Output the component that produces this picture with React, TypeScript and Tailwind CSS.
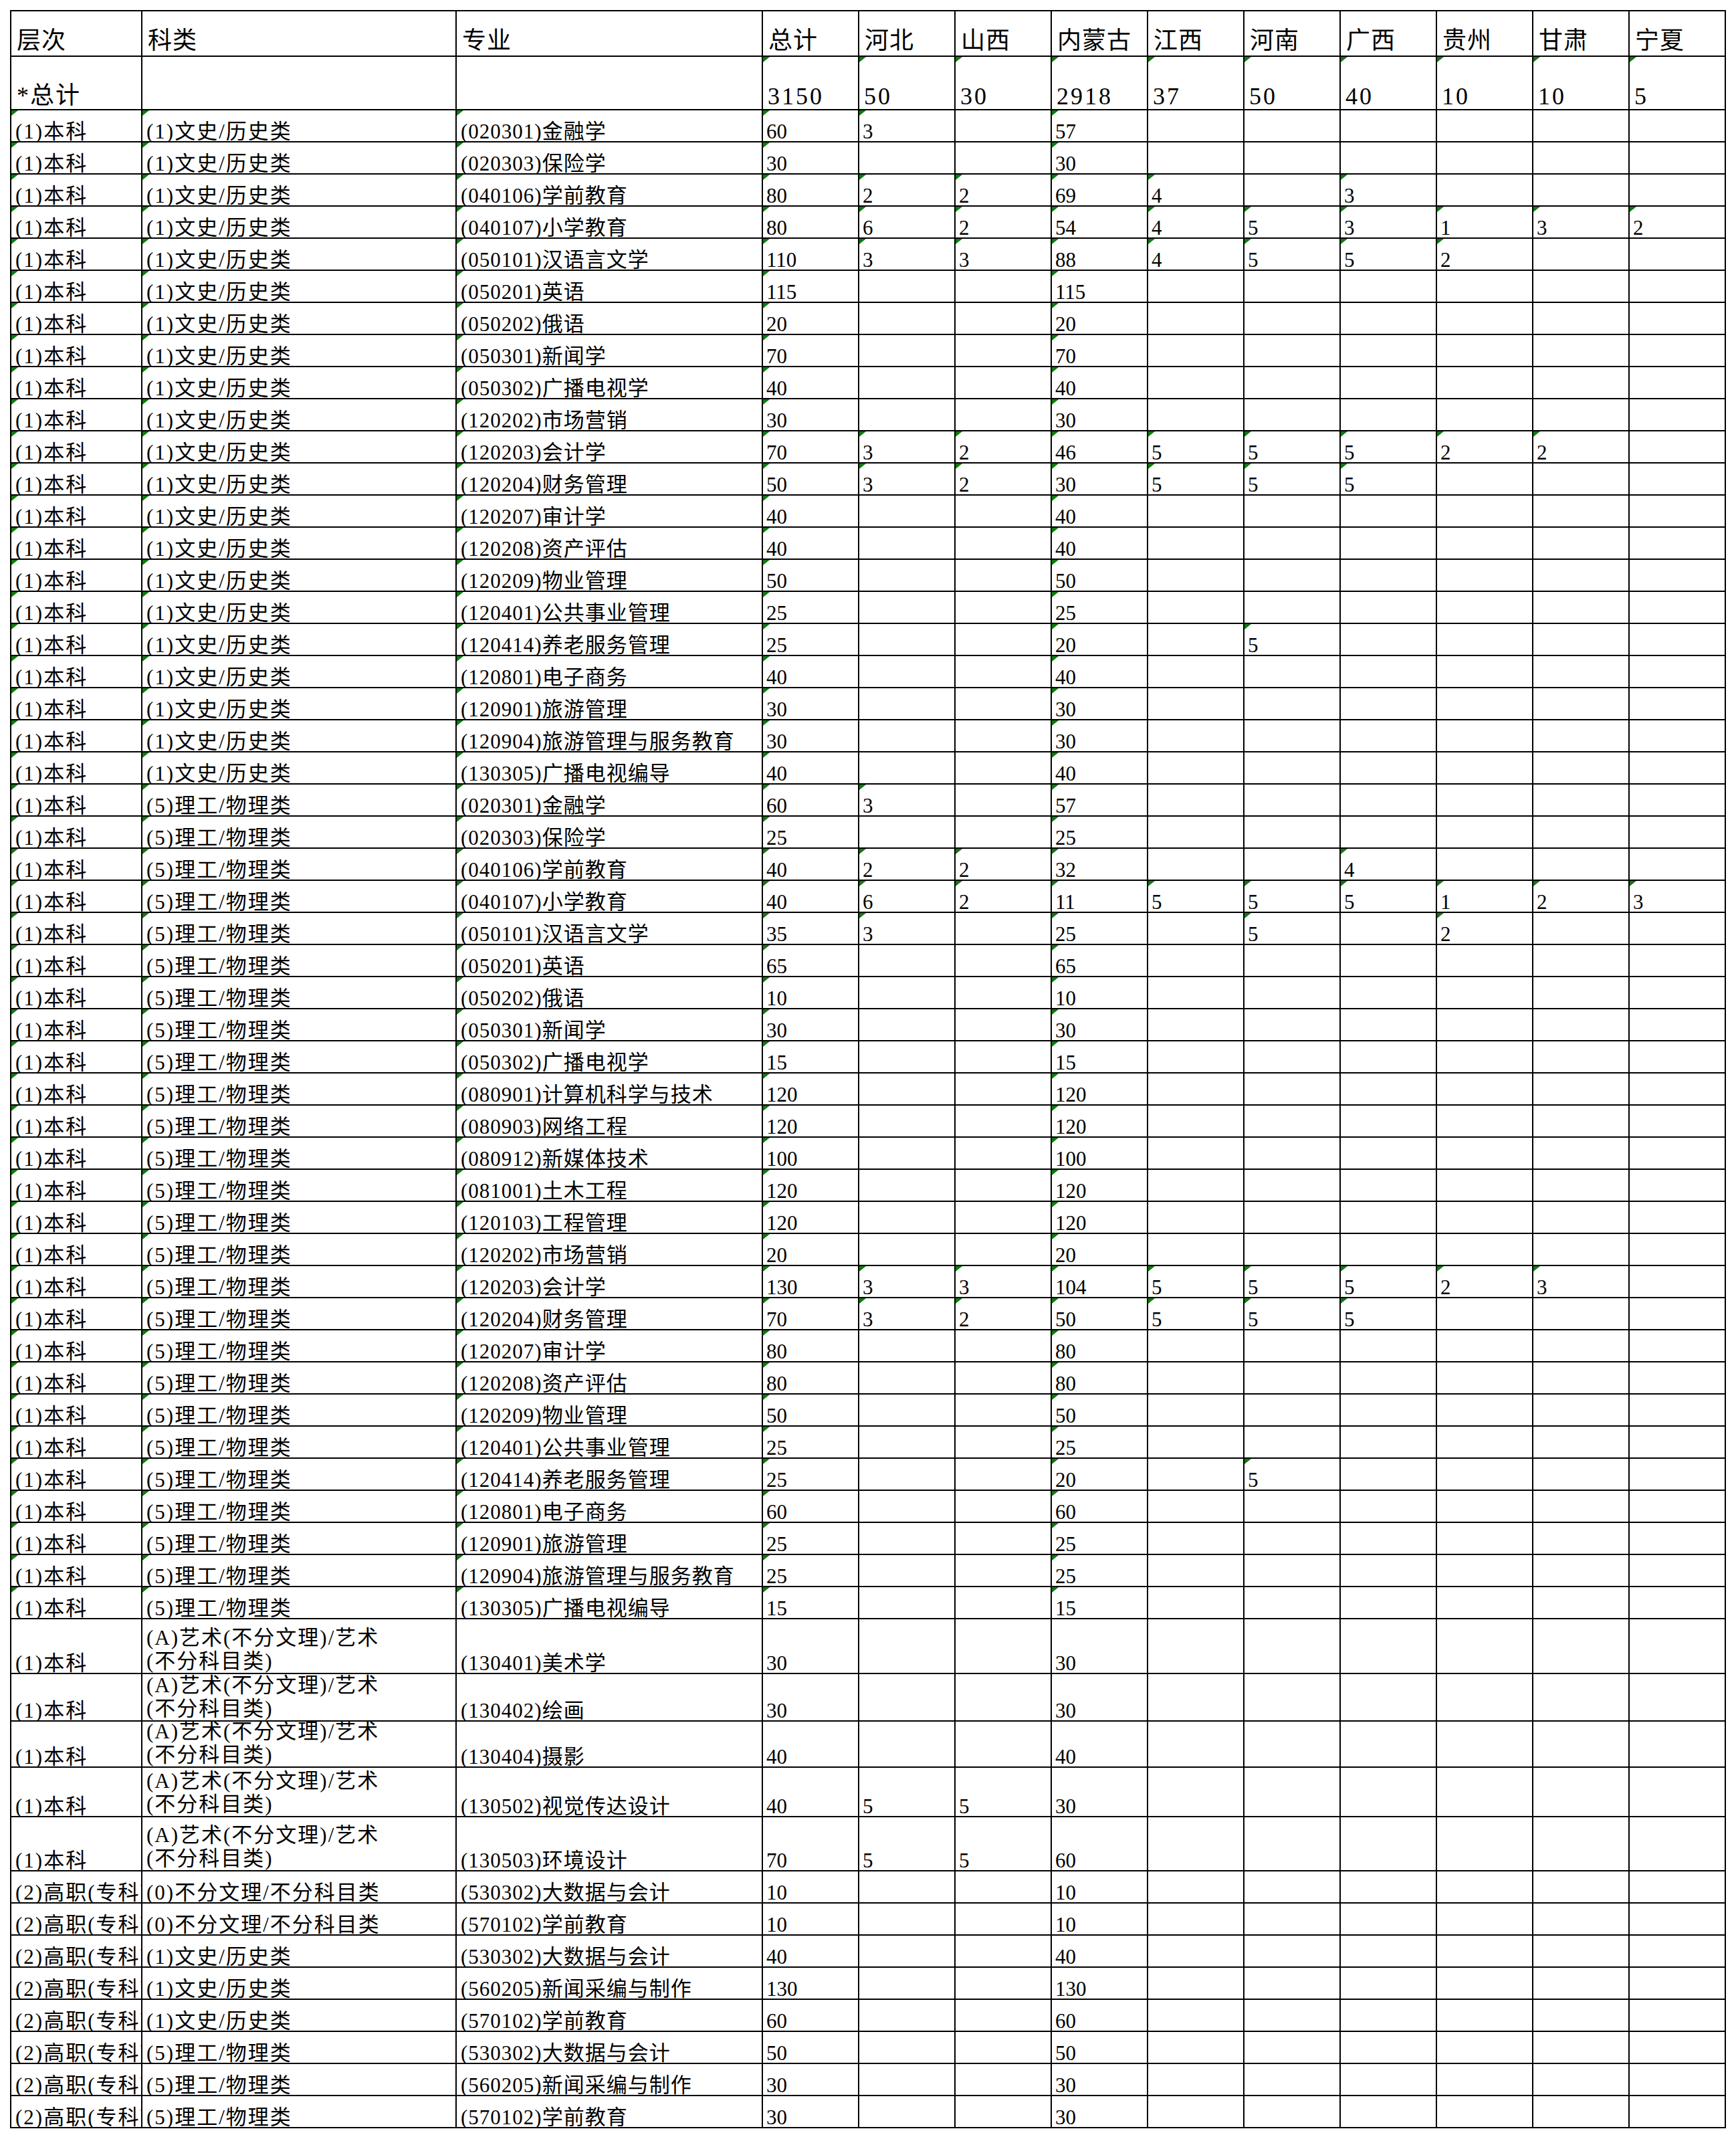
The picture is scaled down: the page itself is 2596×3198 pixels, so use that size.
import React from 'react';

const PROVINCES = ['河北', '山西', '内蒙古', '江西', '河南', '广西', '贵州', '甘肃', '宁夏'];

type Row = {
  level: string;
  kind: string[];
  major: string;
  nums: string[];
  flag: boolean; // green "number stored as text" marks
};

const BK = '(1)本科';
const GZ = '(2)高职(专科)';
const WS = '(1)文史/历史类';
const LG = '(5)理工/物理类';
const YS = ['(A)艺术(不分文理)/艺术', '(不分科目类)'];
const BF = '(0)不分文理/不分科目类';

// 总计, 河北, 山西, 内蒙古, 江西, 河南, 广西, 贵州, 甘肃, 宁夏
const raw: [string, string | string[], string, string][] = [
  [BK, WS, '(020301)金融学', '60,3,,57'],
  [BK, WS, '(020303)保险学', '30,,,30'],
  [BK, WS, '(040106)学前教育', '80,2,2,69,4,,3'],
  [BK, WS, '(040107)小学教育', '80,6,2,54,4,5,3,1,3,2'],
  [BK, WS, '(050101)汉语言文学', '110,3,3,88,4,5,5,2'],
  [BK, WS, '(050201)英语', '115,,,115'],
  [BK, WS, '(050202)俄语', '20,,,20'],
  [BK, WS, '(050301)新闻学', '70,,,70'],
  [BK, WS, '(050302)广播电视学', '40,,,40'],
  [BK, WS, '(120202)市场营销', '30,,,30'],
  [BK, WS, '(120203)会计学', '70,3,2,46,5,5,5,2,2'],
  [BK, WS, '(120204)财务管理', '50,3,2,30,5,5,5'],
  [BK, WS, '(120207)审计学', '40,,,40'],
  [BK, WS, '(120208)资产评估', '40,,,40'],
  [BK, WS, '(120209)物业管理', '50,,,50'],
  [BK, WS, '(120401)公共事业管理', '25,,,25'],
  [BK, WS, '(120414)养老服务管理', '25,,,20,,5'],
  [BK, WS, '(120801)电子商务', '40,,,40'],
  [BK, WS, '(120901)旅游管理', '30,,,30'],
  [BK, WS, '(120904)旅游管理与服务教育', '30,,,30'],
  [BK, WS, '(130305)广播电视编导', '40,,,40'],
  [BK, LG, '(020301)金融学', '60,3,,57'],
  [BK, LG, '(020303)保险学', '25,,,25'],
  [BK, LG, '(040106)学前教育', '40,2,2,32,,,4'],
  [BK, LG, '(040107)小学教育', '40,6,2,11,5,5,5,1,2,3'],
  [BK, LG, '(050101)汉语言文学', '35,3,,25,,5,,2'],
  [BK, LG, '(050201)英语', '65,,,65'],
  [BK, LG, '(050202)俄语', '10,,,10'],
  [BK, LG, '(050301)新闻学', '30,,,30'],
  [BK, LG, '(050302)广播电视学', '15,,,15'],
  [BK, LG, '(080901)计算机科学与技术', '120,,,120'],
  [BK, LG, '(080903)网络工程', '120,,,120'],
  [BK, LG, '(080912)新媒体技术', '100,,,100'],
  [BK, LG, '(081001)土木工程', '120,,,120'],
  [BK, LG, '(120103)工程管理', '120,,,120'],
  [BK, LG, '(120202)市场营销', '20,,,20'],
  [BK, LG, '(120203)会计学', '130,3,3,104,5,5,5,2,3'],
  [BK, LG, '(120204)财务管理', '70,3,2,50,5,5,5'],
  [BK, LG, '(120207)审计学', '80,,,80'],
  [BK, LG, '(120208)资产评估', '80,,,80'],
  [BK, LG, '(120209)物业管理', '50,,,50'],
  [BK, LG, '(120401)公共事业管理', '25,,,25'],
  [BK, LG, '(120414)养老服务管理', '25,,,20,,5'],
  [BK, LG, '(120801)电子商务', '60,,,60'],
  [BK, LG, '(120901)旅游管理', '25,,,25'],
  [BK, LG, '(120904)旅游管理与服务教育', '25,,,25'],
  [BK, LG, '(130305)广播电视编导', '15,,,15'],
  [BK, YS, '(130401)美术学', '30,,,30'],
  [BK, YS, '(130402)绘画', '30,,,30'],
  [BK, YS, '(130404)摄影', '40,,,40'],
  [BK, YS, '(130502)视觉传达设计', '40,5,5,30'],
  [BK, YS, '(130503)环境设计', '70,5,5,60'],
  [GZ, BF, '(530302)大数据与会计', '10,,,10'],
  [GZ, BF, '(570102)学前教育', '10,,,10'],
  [GZ, WS, '(530302)大数据与会计', '40,,,40'],
  [GZ, WS, '(560205)新闻采编与制作', '130,,,130'],
  [GZ, WS, '(570102)学前教育', '60,,,60'],
  [GZ, LG, '(530302)大数据与会计', '50,,,50'],
  [GZ, LG, '(560205)新闻采编与制作', '30,,,30'],
  [GZ, LG, '(570102)学前教育', '30,,,30'],
];

const rows: Row[] = raw.map(([level, kind, major, nums], i) => {
  const list = nums.split(',');
  while (list.length < 10) list.push('');
  return {
    level,
    kind: Array.isArray(kind) ? kind : [kind],
    major,
    nums: list,
    flag: i < 47,
  };
});

const TOTALS = ['3150', '50', '30', '2918', '37', '50', '40', '10', '10', '5'];

function Mark() {
  return (
    <span className="absolute left-0 top-0 h-0 w-0 border-t-[8px] border-r-[10px] border-t-[#0b7d0b] border-r-transparent" />
  );
}

function Cell(props: { children?: React.ReactNode; mark?: boolean; className?: string }) {
  return (
    <div
      className={
        'relative flex items-end overflow-hidden whitespace-nowrap border-b-2 border-r-2 border-black ' +
        (props.className ?? '')
      }
    >
      {props.mark ? <Mark /> : null}
      {props.children}
    </div>
  );
}

export default function App() {
  return (
    <div className="min-h-[3198px] w-[2596px] bg-white pl-[15px] pt-[15px] font-['Liberation_Serif','Noto_Sans_CJK_SC',serif] text-black">
      <div className="grid w-fit grid-cols-[196px_470px_458px_repeat(10,144px)] grid-rows-[68px_80px_repeat(47,48px)_82px_71px_69px_74px_81px_repeat(8,48px)] border-l-2 border-t-2 border-black">
        {/* header */}
        {['层次', '科类', '专业', '总计', ...PROVINCES].map((h) => (
          <Cell key={h} className="pb-[4px] pl-[8px] text-[36px] leading-[36px] tracking-[1px]">
            <span>{h}</span>
          </Cell>
        ))}

        {/* total row */}
        <Cell className="pb-[2px] pl-[8px] text-[36px] leading-[36px] tracking-[2px]">
          <span>*总计</span>
        </Cell>
        <Cell />
        <Cell />
        {TOTALS.map((n, i) => (
          <Cell key={'t' + i} mark className="pb-[1px] pl-[7px] text-[36px] leading-[36px] tracking-[3px]">
            <span>{n}</span>
          </Cell>
        ))}

        {/* data */}
        {rows.map((r, ri) => (
          <React.Fragment key={ri}>
            <Cell mark={r.flag} className="pl-[6px] text-[31px] leading-[28px] tracking-[2px]">
              <span>{r.level}</span>
            </Cell>
            <Cell mark={r.flag} className="pl-[6px] text-[31px] tracking-[2px]">
              {r.kind.length > 1 ? (
                <div className="flex flex-col leading-[35px]">
                  {r.kind.map((k) => (
                    <span key={k}>{k}</span>
                  ))}
                </div>
              ) : (
                <span className="leading-[28px]">{r.kind[0]}</span>
              )}
            </Cell>
            <Cell mark={r.flag} className="pl-[6px] text-[31px] leading-[28px] tracking-[1px]">
              <span>{r.major}</span>
            </Cell>
            {r.nums.map((n, ni) => (
              <Cell
                key={ni}
                mark={r.flag && n !== ''}
                className="pl-[5px] text-[31px] leading-[28px]"
              >
                <span>{n}</span>
              </Cell>
            ))}
          </React.Fragment>
        ))}
      </div>
    </div>
  );
}
